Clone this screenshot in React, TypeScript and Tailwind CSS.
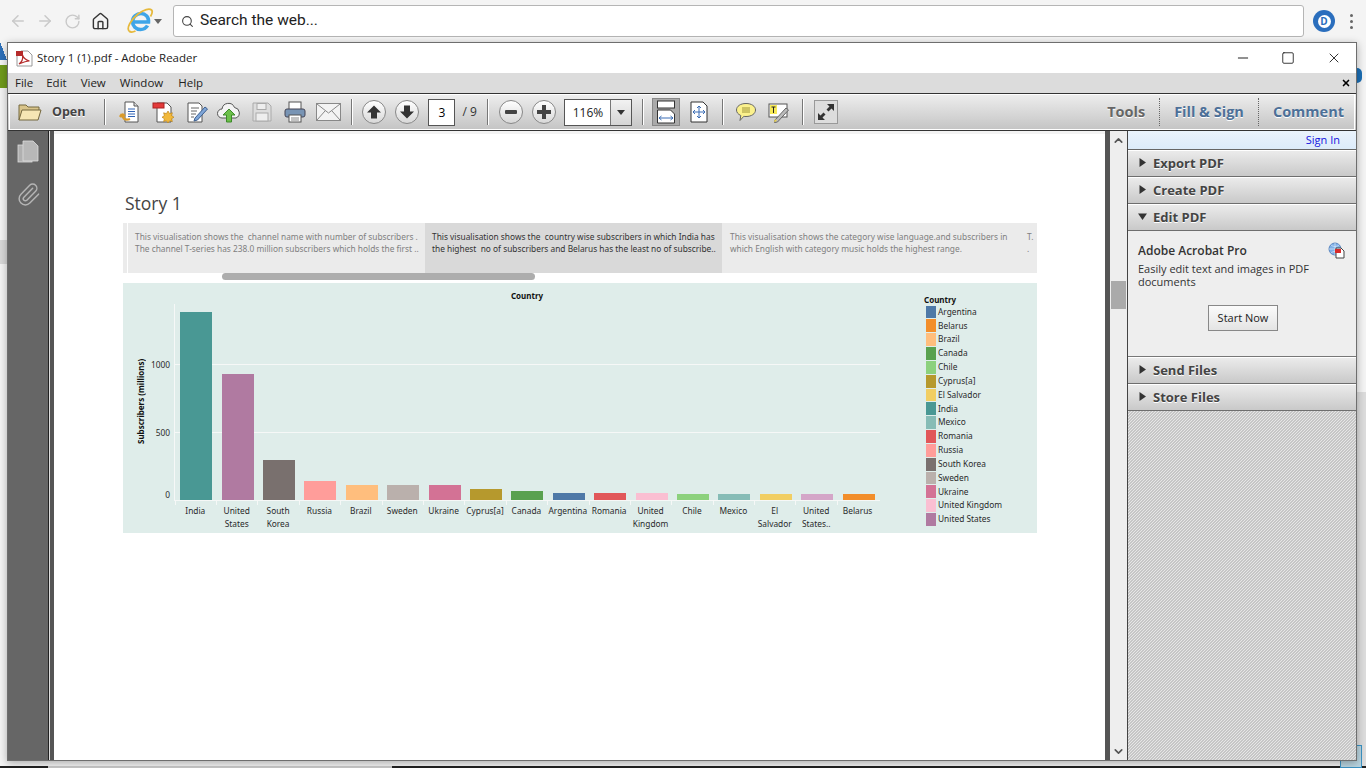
import { ArrowLeft, ArrowRight, RotateCw, Home, Search, ChevronUp, ChevronDown, X, Minus, Square, Paperclip } from 'lucide-react';

const tick = 'w-[41.4px] flex-none';

const countries = [
  { name: 'India', h: 188, color: 'bg-[#499894]' },
  { name: 'United States', h: 126, color: 'bg-[#b07aa1]' },
  { name: 'South Korea', h: 40, color: 'bg-[#79706e]' },
  { name: 'Russia', h: 19, color: 'bg-[#ff9d9a]' },
  { name: 'Brazil', h: 15, color: 'bg-[#ffbe7d]' },
  { name: 'Sweden', h: 15, color: 'bg-[#bab0ac]' },
  { name: 'Ukraine', h: 15, color: 'bg-[#d37295]' },
  { name: 'Cyprus[a]', h: 11, color: 'bg-[#b6992d]' },
  { name: 'Canada', h: 9, color: 'bg-[#59a14f]' },
  { name: 'Argentina', h: 7, color: 'bg-[#4e79a7]' },
  { name: 'Romania', h: 7, color: 'bg-[#e15759]' },
  { name: 'United Kingdom', h: 7, color: 'bg-[#fabfd2]' },
  { name: 'Chile', h: 6, color: 'bg-[#8cd17d]' },
  { name: 'Mexico', h: 6, color: 'bg-[#86bcb6]' },
  { name: 'El\nSalvador', h: 6, color: 'bg-[#f1ce63]' },
  { name: 'United States..', h: 6, color: 'bg-[#d4a6c8]' },
  { name: 'Belarus', h: 6, color: 'bg-[#f28e2b]' },
];

const legend = [
  ['Argentina', 'bg-[#4e79a7]'],
  ['Belarus', 'bg-[#f28e2b]'],
  ['Brazil', 'bg-[#ffbe7d]'],
  ['Canada', 'bg-[#59a14f]'],
  ['Chile', 'bg-[#8cd17d]'],
  ['Cyprus[a]', 'bg-[#b6992d]'],
  ['El Salvador', 'bg-[#f1ce63]'],
  ['India', 'bg-[#499894]'],
  ['Mexico', 'bg-[#86bcb6]'],
  ['Romania', 'bg-[#e15759]'],
  ['Russia', 'bg-[#ff9d9a]'],
  ['South Korea', 'bg-[#79706e]'],
  ['Sweden', 'bg-[#bab0ac]'],
  ['Ukraine', 'bg-[#d37295]'],
  ['United Kingdom', 'bg-[#fabfd2]'],
  ['United States', 'bg-[#b07aa1]'],
];

const Sep = () => <div className="w-px h-[26px] bg-[#777] border-r border-white box-content flex-none" />;

const Doc = () => (
  <svg width="22" height="24" viewBox="0 0 22 24" fill="none">
    <path d="M6 2h9l4 4v16H6z" fill="#fff" stroke="#555" />
    <path d="M15 2v4h4" stroke="#555" fill="#ddd" />
    <path d="M9 9h7M9 11.500h7M9 14h7M9 16.500h7" stroke="#2f62b5" />
    <path d="M11 19c-5 2-8-1-8-5M3 14l-2 3M3 14l3 2" stroke="#d99a2b" strokeWidth="2.400" />
  </svg>
);
const DocStar = () => (
  <svg width="24" height="24" viewBox="0 0 24 24" fill="none">
    <path d="M5 3h10l4 4v15H5z" fill="#fff" stroke="#555" />
    <rect x="1" y="3" width="11" height="5" fill="#e33a3a" stroke="#a22" />
    <path d="M16 11l1.600 2.600 2.800-.8-.8 2.800L22 17.200l-2.400 1.600.8 2.800-2.800-.8L16 23l-1.600-2.200-2.800.8.8-2.800L10 17.200l2.400-1.600-.8-2.800 2.800.8z" fill="#f2b93b" stroke="#b57c12" strokeWidth=".6" />
  </svg>
);
const DocPen = () => (
  <svg width="24" height="24" viewBox="0 0 24 24" fill="none">
    <path d="M3 3h11l3 3v16H3z" fill="#fff" stroke="#555" />
    <path d="M6 8h8M6 11h6M6 14h5M6 17h3" stroke="#666" />
    <path d="M10 18l10-11 2.500 2-10 11-3.500 1z" fill="#7fa6d8" stroke="#3d5f8f" />
  </svg>
);
const Cloud = () => (
  <svg width="26" height="24" viewBox="0 0 26 24" fill="none">
    <path d="M6 18a4.500 4.500 0 0 1 0-9 6.500 6.500 0 0 1 12.500-1.500A5.500 5.500 0 0 1 20 18z" fill="#f4f4f4" stroke="#555" />
    <path d="M13 9l6 6h-3.500v7h-5v-7H7z" fill="#6cc04a" stroke="#3d8a2a" />
  </svg>
);
const Disk = () => (
  <svg width="22" height="22" viewBox="0 0 22 22" fill="none">
    <path d="M2 2h15l3 3v15H2z" fill="#ddd" stroke="#aaa" />
    <rect x="6" y="2.500" width="9" height="6" fill="#eee" stroke="#aaa" />
    <rect x="5" y="12" width="12" height="8" fill="#eee" stroke="#aaa" />
  </svg>
);
const Printer = () => (
  <svg width="24" height="24" viewBox="0 0 24 24" fill="none">
    <rect x="6" y="2" width="12" height="8" fill="#fff" stroke="#555" />
    <rect x="2" y="9" width="20" height="8" rx="2" fill="#7894b4" stroke="#445" />
    <rect x="6" y="15" width="12" height="7" fill="#fff" stroke="#555" />
    <path d="M8 18h8M8 20h8" stroke="#888" />
  </svg>
);
const Mail = () => (
  <svg width="25" height="18" viewBox="0 0 25 18" fill="none">
    <rect x=".5" y=".5" width="24" height="17" fill="#f3f3f3" stroke="#888" />
    <path d="M1 1l11.500 9L24 1M1 17l8-9M24 17l-8-9" stroke="#888" />
  </svg>
);
const CircleBtn = ({ children }: { children: React.ReactNode }) => (
  <div className="w-[24px] h-[24px] rounded-full border border-[#888] bg-gradient-to-b from-white to-[#d8d8d8] flex items-center justify-center flex-none">
    {children}
  </div>
);
const UpArrow = ({ down }: { down?: boolean }) => (
  <svg width="16" height="16" viewBox="0 0 16 16" className={down ? 'rotate-180' : ''}>
    <path d="M8 1.500L15 8.500H11V14.500H5V8.500H1z" fill="#333" />
  </svg>
);
const FitWidth = () => (
  <svg width="22" height="26" viewBox="0 0 22 26" fill="none">
    <rect x="2.500" y="2" width="17" height="7" fill="#fff" stroke="#333" />
    <path d="M2.500 11h13l4 4v9h-17z" fill="#fff" stroke="#333" />
    <path d="M4 19h14M4 19l2.500-2M4 19l2.500 2M18 19l-2.500-2M18 19l-2.500 2" stroke="#3a6db5" />
  </svg>
);
const FitPage = () => (
  <svg width="20" height="22" viewBox="0 0 20 22" fill="none">
    <path d="M2 1h12l4 4v16H2z" fill="#fff" stroke="#333" />
    <path d="M10 5v12M4 11h12M10 5L8 7M10 5l2 2M10 17l-2-2M10 17l2-2M4 11l2-2M4 11l2 2M16 11l-2-2M16 11l-2 2" stroke="#3a6db5" />
  </svg>
);
const Bubble = () => (
  <svg width="22" height="20" viewBox="0 0 22 20" fill="none">
    <path d="M11 1.500c5.500 0 9.500 2.700 9.500 6.500s-4 6.500-9.500 6.500c-.8 0-1.500 0-2.200-.2L5 18.500l.8-5C3 12.300 1.500 10.300 1.500 8c0-3.800 4-6.500 9.500-6.500z" fill="#fbf18d" stroke="#666" />
    <path d="M7 6h8M7 8h8M7 10h8" stroke="#a0963a" />
  </svg>
);
const TextPen = () => (
  <svg width="22" height="22" viewBox="0 0 22 22" fill="none">
    <rect x="1" y="3" width="18" height="13" fill="#fff" stroke="#555" />
    <rect x="2" y="4" width="7" height="9" fill="#f7ea58" />
    <path d="M3.500 6h4M5.500 6v6" stroke="#222" />
    <path d="M7 19l11-12 2.500 2-11 12-3 .5z" fill="#bbb" stroke="#666" />
    <path d="M6 21l1-3 2 2z" fill="#f0d64a" />
  </svg>
);
const Expand = () => (
  <svg width="22" height="22" viewBox="0 0 22 22">
    <path d="M12 3h7v7l-2.500-2.500-3 3-2-2 3-3z" fill="#333" />
    <path d="M10 19H3v-7l2.500 2.500 3-3 2 2-3 3z" fill="#333" />
  </svg>
);
const Folder = () => (
  <svg width="26" height="22" viewBox="0 0 26 22" fill="none">
    <path d="M2 19V4h7l2 2h11v3" fill="#d9c48a" stroke="#75683f" />
    <path d="M2 19l3-10h19l-3 10z" fill="#f6e6b4" stroke="#75683f" />
  </svg>
);
const Tri = ({ down }: { down?: boolean }) => (
  <svg width="9" height="9" viewBox="0 0 9 9" className="flex-none">
    {down ? <path d="M0 1.500h9L4.500 8z" fill="#333" /> : <path d="M1.500 0L8 4.500 1.500 9z" fill="#333" />}
  </svg>
);
const IELogo = () => (
  <svg width="28" height="28" viewBox="0 0 28 28" fill="none">
    <path d="M7.500 15h15c.4-5-3-8.500-7.500-8.500S6.500 10 6.500 14.500 10 22.500 14.500 22.500c3 0 5.500-1.300 7-4" stroke="#3fa5e8" strokeWidth="3.600" />
    <path d="M3 24c-2.500-3 1.500-11 9-17 6-4.500 11.500-6 13.500-4 1.500 1.500.5 4-1 6.500" stroke="#e6b93c" strokeWidth="1.800" />
    <path d="M3 24c1.500 1.500 4 1.200 6.500 0" stroke="#e6b93c" strokeWidth="1.800" />
  </svg>
);

function Row({ label, open }: { label: string; open?: boolean }) {
  return (
    <div className="h-[27px] flex-none flex items-center gap-[6px] pl-[10px] pb-[2px] border-b border-[#6e6e6e] border-t border-t-white bg-gradient-to-b from-[#ebebeb] to-[#c9c9c9]">
      <Tri down={open} />
      <span className="text-[13px] font-bold text-[#444] leading-[22px] [text-shadow:0_1px_0_#fff]">{label}</span>
    </div>
  );
}

function Chart() {
  return (
    <div className="w-[914px] h-[250px] mt-[3px] bg-[#dfedea] flex text-[#2a2a2a] text-[8.35px] font-['Noto_Sans',sans-serif]">
      <div className="w-[757px] pl-[51px] flex-none flex flex-col">
        <div className="h-[21px] pt-[7px] text-center text-[8px] font-bold text-[#111] leading-[12px]">Country</div>
        <div className="relative h-[197px] w-[706px] border-l border-b border-[#f6f8f7]">
          <div className="absolute left-0 right-0 top-[60px] h-px bg-[#f6f8f7]" />
          <div className="absolute left-0 right-0 top-[128px] h-px bg-[#f6f8f7]" />
          <span className="absolute right-[710px] top-[55px] leading-[12px]">1000</span>
          <span className="absolute right-[710px] top-[123px] leading-[12px]">500</span>
          <span className="absolute right-[710px] top-[185px] leading-[12px]">0</span>
          <span className="absolute left-[-39px] top-[54px] h-[86px] text-[8px] leading-[10px] font-bold text-[#111] whitespace-nowrap [writing-mode:vertical-rl] rotate-180">
            Subscribers (millions)
          </span>
          <div className="relative flex items-end h-full pl-[0.6px]">
            {countries.map((c) => (
              <div key={c.name} className={`${tick} flex justify-center`}>
                <div className={`w-[32px] ${c.color}`} style={{ height: c.h }} />
              </div>
            ))}
          </div>
        </div>
        <div className="flex leading-[13px] pl-[0.6px]">
          {countries.map((c) => (
            <div key={c.name} className={`${tick} relative pt-[3px] text-center h-[30px]`}>
              <div className="absolute left-0 top-0 w-px h-[4px] bg-[#f6f8f7]" />
              <div className="-mx-[3px] whitespace-pre-line">{c.name}</div>
            </div>
          ))}
        </div>
      </div>
      <div className="ml-[46px] pt-[12px] flex flex-col">
        <div className="text-[8px] font-bold text-[#111] leading-[10px] -ml-[2px]">Country</div>
        {legend.map(([name, color]) => (
          <div key={name} className="h-[13.85px] flex items-center gap-[2px]">
            <div className={`w-[10px] h-[12.8px] ${color}`} />
            <span className="whitespace-nowrap">{name}</span>
          </div>
        ))}
      </div>
    </div>
  );
}

export default function App() {
  return (
    <div className="relative w-[1366px] h-[768px] overflow-hidden bg-[#f4f4f4] font-['Open_Sans',sans-serif]">
      {/* browser page peeking out round the reader window */}
      <div className="absolute left-0 top-[65px] w-[7px] h-[23px] bg-[#6f9a1c]" />
      <div className="absolute left-0 top-[240px] w-[7px] h-[24px] bg-[#d8d8d8]" />
      <div className="absolute left-0 top-[42px] w-[7px] h-[18px] bg-[linear-gradient(to_bottom_left,transparent_50%,#2d6fb8_50%)]" />
      <div className="absolute left-[1357px] top-[68px] w-[5px] h-[15px] rounded-r-full bg-[#1b6fb5]" />
      <div className="absolute left-[1357px] top-[392px] right-0 h-[376px] bg-[#dcdcdc]" />
      <div className="absolute left-0 right-0 bottom-0 h-[2px] bg-[#222]" />
      <div className="absolute left-[48px] w-[344px] bottom-0 h-[2px] bg-[#c8c8c8]" />
      <div className="absolute left-[1340px] w-[22px] top-[745px] h-[23px] bg-[#b9d4df] border border-[#3b93c4]" />

      {/* browser bar */}
      <div className="relative h-[42px] flex items-center pl-[9px] text-[#c9c9c9]">
        <div className="w-[18px] flex-none"><ArrowLeft size={18} strokeWidth={2} /></div>
        <div className="w-[18px] ml-[9px] flex-none"><ArrowRight size={18} strokeWidth={2} /></div>
        <div className="w-[18px] ml-[10px] flex-none"><RotateCw size={17} strokeWidth={2} /></div>
        <div className="ml-[9px] flex-none text-[#333]"><Home size={19} strokeWidth={1.8} /></div>
        <div className="ml-[16px] flex-none"><IELogo /></div>
        <svg width="8" height="5" viewBox="0 0 8 5" className="flex-none"><path d="M0 0h8L4 5z" fill="#666" /></svg>
        <div className="ml-[11px] w-[1131px] h-[32px] bg-white border border-[#b5b5b5] rounded-[3px] flex items-center pl-[7px] gap-[6px] flex-none">
          <Search size={13} strokeWidth={2} className="text-[#444]" />
          <span className="text-[15.5px] text-[#222] font-['Roboto',sans-serif]">Search the web...</span>
        </div>
        <div className="ml-[9px] w-[22px] h-[22px] rounded-full bg-[#2a6ebd] flex items-center justify-center flex-none">
          <span className="w-[13px] h-[13px] rounded-full bg-white text-[#2a6ebd] text-[10px] leading-[13px] font-bold text-center">D</span>
        </div>
        <div className="ml-[15px] flex flex-col gap-[3px] flex-none">
          <span className="w-[3px] h-[3px] rounded-full bg-[#666]" />
          <span className="w-[3px] h-[3px] rounded-full bg-[#666]" />
          <span className="w-[3px] h-[3px] rounded-full bg-[#666]" />
        </div>
      </div>

      {/* reader window */}
      <div className="absolute left-[7px] top-[42px] w-[1350px] h-[719px] border border-[#6e6e6e] bg-white flex flex-col shadow-[0_2px_8px_rgba(0,0,0,0.3)]">
        <div className="h-[30px] flex-none flex items-center pl-[8px] text-[11.5px] text-[#222]">
          <svg width="17" height="17" viewBox="0 0 17 17" fill="none" className="flex-none">
            <path d="M5 1h7l4 4v11H1V5" fill="#fff" stroke="#999" />
            <rect x="0" y="1" width="7" height="5" fill="#b52b2b" />
            <path d="M3 14c3-2 4-6 3.500-9 1 3 3 5 7 6-3 0-6 1-10.500 3z" fill="none" stroke="#b52b2b" strokeWidth="1.200" />
          </svg>
          <span className="ml-[4px] w-[1085px]">Story 1 (1).pdf - Adobe Reader</span>
          <Minus size={16} strokeWidth={1.3} className="ml-[113px] text-black" />
          <Square size={14} strokeWidth={1.3} className="ml-[30px] text-black" />
          <X size={16} strokeWidth={1.2} className="ml-[31px] text-black" />
        </div>

        <div className="h-[20px] flex-none bg-[#dcdcdc] flex items-center pl-[7px] gap-[13px] text-[11.5px] text-[#222]">
          <span>File</span>
          <span>Edit</span>
          <span className="ml-[1px]">View</span>
          <span className="ml-[1px]">Window</span>
          <span className="ml-[2px]">Help</span>
          <X size={10} strokeWidth={4} className="ml-auto mr-[5px] text-black" />
        </div>

        <div className="h-[38px] flex-none flex items-center pl-[9px] border-y border-[#333] outline outline-1 -outline-offset-2 outline-white bg-gradient-to-b from-[#eeeeee] to-[#c4c4c4]">
          <Folder />
          <span className="ml-[9px] text-[12.5px] font-bold text-[#444] [text-shadow:0_1px_0_#fff]">Open</span>
          <div className="ml-[19px]"><Sep /></div>
          <div className="ml-[13px] flex-none"><Doc /></div>
          <div className="ml-[11px] flex-none"><DocStar /></div>
          <div className="ml-[9px] flex-none"><DocPen /></div>
          <div className="ml-[7px] flex-none"><Cloud /></div>
          <div className="ml-[9px] flex-none"><Disk /></div>
          <div className="ml-[10px] flex-none"><Printer /></div>
          <div className="ml-[9px] flex-none"><Mail /></div>
          <div className="ml-[10px]"><Sep /></div>
          <div className="ml-[9px]"><CircleBtn><UpArrow /></CircleBtn></div>
          <div className="ml-[9px]"><CircleBtn><UpArrow down /></CircleBtn></div>
          <div className="ml-[9px] w-[27px] h-[27px] bg-white border border-[#555] text-[12px] text-center leading-[25px] flex-none">3</div>
          <span className="ml-[7px] w-[17px] flex-none text-[12px] text-[#333] whitespace-nowrap">/ 9</span>
          <div className="ml-[8px]"><Sep /></div>
          <div className="ml-[10px]"><CircleBtn><span className="w-[12px] h-[4px] bg-[#444] rounded-[1px]" /></CircleBtn></div>
          <div className="ml-[9px]">
            <CircleBtn>
              <svg width="14" height="14" viewBox="0 0 14 14"><path d="M5 0h4v5h5v4H9v5H5V9H0V5h5z" fill="#444" /></svg>
            </CircleBtn>
          </div>
          <div className="ml-[8px] w-[68px] h-[27px] bg-white border border-[#555] flex flex-none">
            <span className="w-[45px] text-center text-[12px] leading-[25px] text-[#222]">116%</span>
            <div className="flex-1 border-l border-[#777] bg-gradient-to-b from-[#f2f2f2] to-[#d5d5d5] flex items-center justify-center">
              <svg width="8" height="5" viewBox="0 0 8 5"><path d="M0 0h8L4 5z" fill="#333" /></svg>
            </div>
          </div>
          <div className="ml-[10px]"><Sep /></div>
          <div className="ml-[8px] w-[28px] h-[28px] bg-[#aaa] border border-[#888] flex items-center justify-center flex-none"><FitWidth /></div>
          <div className="ml-[9px] flex-none"><FitPage /></div>
          <div className="ml-[13px]"><Sep /></div>
          <div className="ml-[11px] flex-none"><Bubble /></div>
          <div className="ml-[11px] flex-none"><TextPen /></div>
          <div className="ml-[12px]"><Sep /></div>
          <div className="ml-[10px] w-[24px] h-[24px] border border-[#999] bg-[#ddd] flex items-center justify-center flex-none"><Expand /></div>
          <div className="ml-auto flex items-center h-full text-[14.5px] font-bold [text-shadow:0_1px_0_#fff]">
            <span className="text-[#666]">Tools</span>
            <div className="ml-[14px] h-[28px] border-l border-dotted border-[#666]" />
            <span className="ml-[14px] text-[#4d7098]">Fill &amp; Sign</span>
            <div className="ml-[14px] h-[28px] border-l border-dotted border-[#666]" />
            <span className="ml-[14px] mr-[12px] text-[#4d7098]">Comment</span>
          </div>
        </div>

        <div className="flex-1 flex min-h-0">
          <div className="w-[41px] flex-none bg-[#666] border-r border-[#222] flex flex-col items-center pt-[9px] gap-[19px]">
            <svg width="22" height="23" viewBox="0 0 22 23" fill="none">
              <rect x="1" y="5" width="14" height="17" fill="#b0b0b0" stroke="#ddd" strokeWidth=".8" />
              <path d="M6 1h10l5 5v15H6z" fill="#b8b8b8" stroke="#ddd" strokeWidth=".8" />
            </svg>
            <Paperclip size={25} strokeWidth={1.4} className="text-[#b5b5b5]" />
          </div>
          <div className="w-px flex-none bg-[#ddd]" />
          <div className="w-[4px] flex-none bg-[#555]" />

          <div className="w-[1051px] flex-none bg-white border-t-[3px] border-[#f3f3f3] pl-[69px] pt-[57px] text-[8.35px] font-['Noto_Sans',sans-serif]">
            <div className="h-[24px] pl-[2px] leading-[24px] text-[17.5px] text-[#444] font-['Open_Sans',sans-serif]">Story 1</div>
            <div className="mt-[8px] w-[914px] h-[50px] flex leading-[12px] text-[#808080]">
              <div className="w-[4px] bg-[#ebebeb] mr-px" />
              <div className="w-[297px] bg-[#ebebeb] pl-[7px] pt-[8px] whitespace-nowrap">
                <div>This visualisation shows the&nbsp; channel name with number of subscribers .</div>
                <div>The channel T-series has 238.0 million subscribers which holds the first ..</div>
              </div>
              <div className="w-[297px] bg-[#d9d9d9] pl-[7px] pt-[8px] text-[#333] whitespace-nowrap">
                <div>This visualisation shows the&nbsp; country wise subscribers in which India has</div>
                <div>the highest&nbsp; no of subscribers and Belarus has the least no of subscribe..</div>
              </div>
              <div className="flex-1 bg-[#ebebeb] pl-[8px] pt-[8px] flex">
                <div className="w-[297px] whitespace-nowrap">
                  <div>This visualisation shows the category wise language.and subscribers in</div>
                  <div>which English with category music holds the highest range.</div>
                </div>
                <div>
                  <div>T.</div>
                  <div>.</div>
                </div>
              </div>
            </div>
            <div className="ml-[99px] w-[313px] h-[7px] rounded-full bg-[#adadad]" />
            <Chart />
          </div>

          <div className="w-[5px] flex-none bg-[#555]" />
          <div className="w-[17px] flex-none bg-[#eeeeee] flex flex-col items-center pt-[3px] pb-[2px] text-[#555]">
            <ChevronUp size={13} strokeWidth={3} />
            <div className="mt-[134px] w-[15px] h-[28px] bg-[#aaa]" />
            <ChevronDown size={13} strokeWidth={3} className="mt-auto" />
          </div>

          <div className="w-[229px] flex-none border-l border-[#444] flex flex-col bg-[repeating-linear-gradient(135deg,#c6c6c6_0,#c6c6c6_1.4px,#e6e6e6_1.4px,#e6e6e6_2.12px)]">
            <div className="h-[19px] flex-none border-b border-[#666] bg-gradient-to-b from-[#eaf3fc] to-[#dcebfa] text-right pr-[16px] text-[11px] leading-[18px] text-[#1414e0]">Sign In</div>
            <Row label="Export PDF" />
            <Row label="Create PDF" />
            <Row label="Edit PDF" open />
            <div className="h-[126px] flex-none bg-[#eeeeee] border-b border-[#777] pl-[10px] pr-[6px] pt-[11px] relative">
              <div className="text-[12px] font-semibold text-[#333] leading-[18px]">Adobe Acrobat Pro</div>
              <svg width="17" height="17" viewBox="0 0 17 17" fill="none" className="absolute right-[11px] top-[11px]">
                <circle cx="7" cy="7" r="6" fill="#7fb0e8" stroke="#5a86c0" />
                <path d="M1 7h12M7 1v12M3 3c2 2 6 2 8 0M3 11c2-2 6-2 8 0" stroke="#dce9f8" strokeWidth=".7" />
                <path d="M8 6h5l3 3v7H8z" fill="#fff" stroke="#444" />
                <rect x="7" y="7" width="6" height="4" fill="#d82b2b" />
              </svg>
              <div className="mt-[2px] text-[11px] leading-[13px] text-[#333] w-[190px]">Easily edit text and images in PDF documents</div>
              <div className="mt-[17px] ml-[70px] w-[70px] h-[26px] border border-[#888] bg-gradient-to-b from-[#fbfbfb] to-[#e4e4e4] text-center text-[11px] leading-[24px] text-[#222]">Start Now</div>
            </div>
            <Row label="Send Files" />
            <Row label="Store Files" />
          </div>
        </div>
      </div>
    </div>
  );
}
